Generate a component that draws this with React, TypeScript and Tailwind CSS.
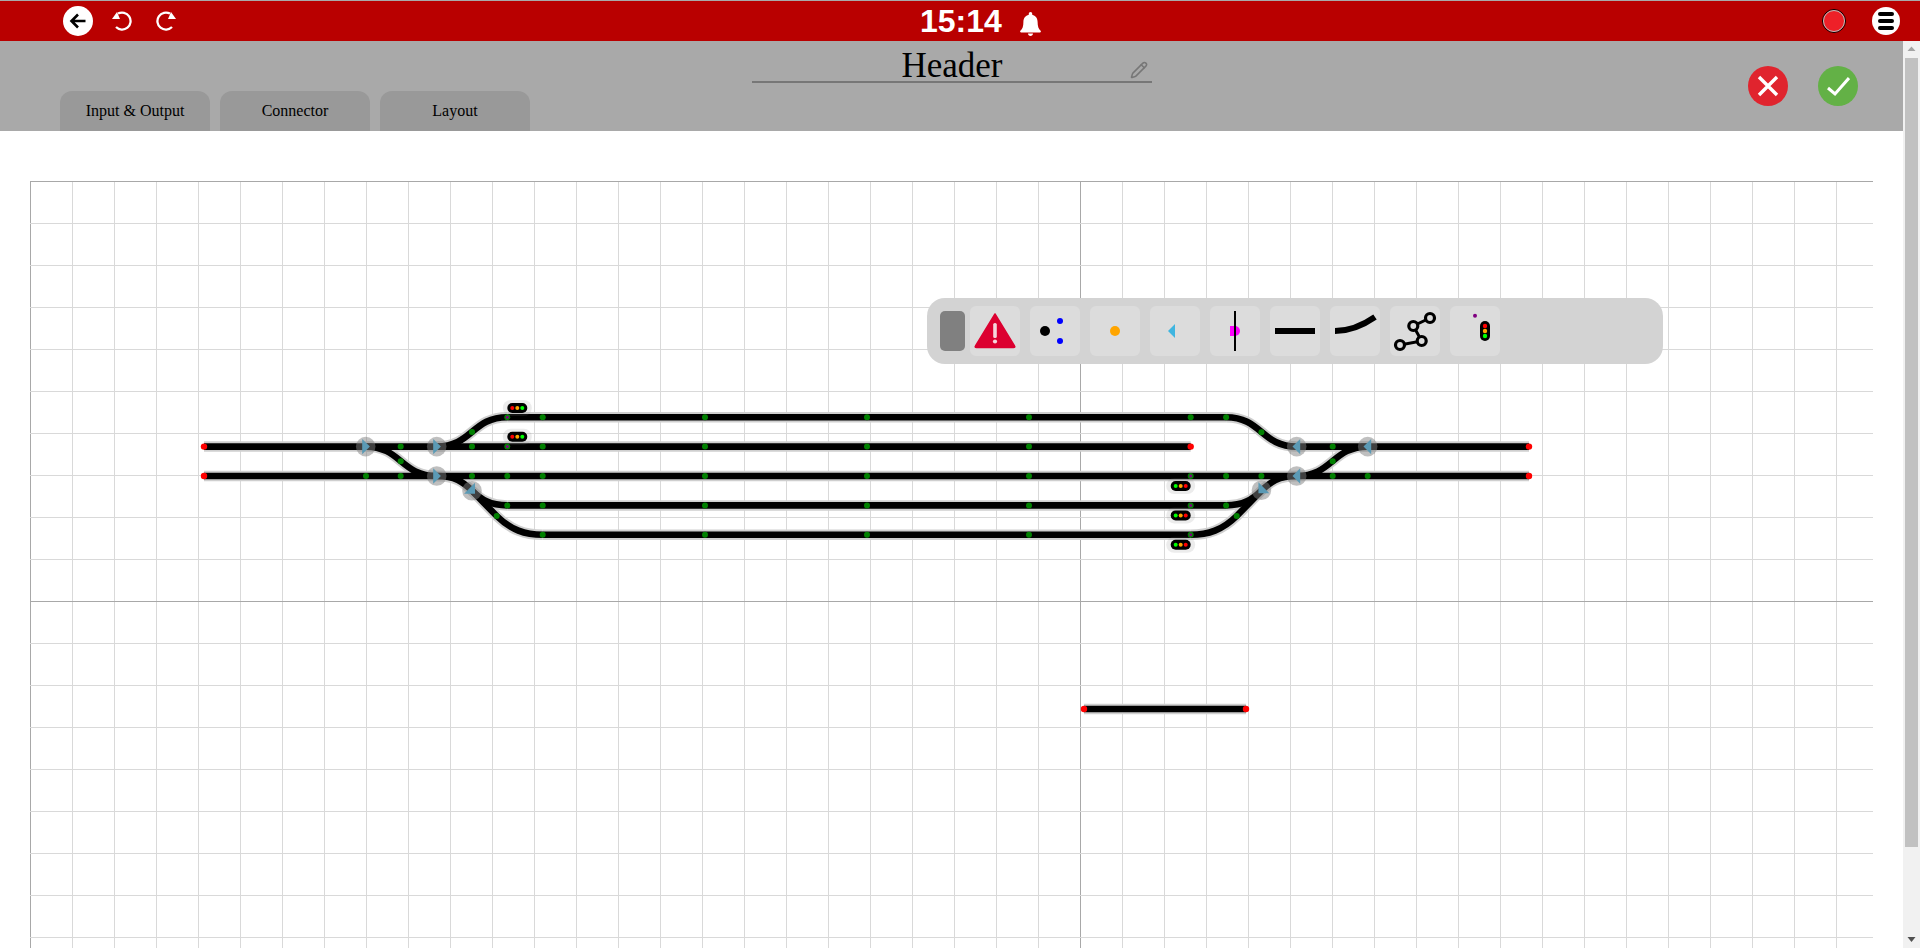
import { Pencil } from "lucide-react";

const rows = [417.2, 446.6, 476, 505.4, 534.8];
const mirror = 1733.4;

// every curve is given for the left throat, the right throat is its mirror
const leftCurves = [
  "M436.7 446.6 C472 446.6 472 417.2 507.3 417.2",
  "M365.7 446.6 C401 446.6 401 476 436.7 476",
  "M436.7 476 C455 476 463 482 472 490.7 C481 499.5 490 505.4 507.3 505.4",
  "M472 490.7 L496.7 516 C511 530 525 534.8 542.7 534.8",
];

const straights: [number, number, number][] = [
  [507.3, 1226.1, rows[0]],
  [204, 1190.7, rows[1]],
  [204, 1529, rows[2]],
  [507.3, 1226.1, rows[3]],
  [542.7, 1190.7, rows[4]],
  [1296.7, 1529, rows[1]],
  [1084, 1246, 709],
];

const greenDots: [number, number][] = [
  [542.7, rows[0]], [705, rows[0]], [867, rows[0]], [1029, rows[0]], [1190.7, rows[0]], [1226.1, rows[0]],
  [400.7, rows[1]], [472, rows[1]], [542.7, rows[1]], [705, rows[1]], [867, rows[1]], [1029, rows[1]], [1332.7, rows[1]],
  [366, rows[2]], [400.7, rows[2]], [472, rows[2]], [507.3, rows[2]], [542.7, rows[2]], [705, rows[2]], [867, rows[2]], [1029, rows[2]], [1226.1, rows[2]], [1261.4, rows[2]], [1332.7, rows[2]], [1367.7, rows[2]],
  [507.3, rows[3]], [542.7, rows[3]], [705, rows[3]], [867, rows[3]], [1029, rows[3]], [1226.1, rows[3]],
  [542.7, rows[4]], [705, rows[4]], [867, rows[4]], [1029, rows[4]],
  [472, 432], [400.7, 461.3], [496.7, 516], [1236.7, 516], [1261.4, 432.3], [1332.7, 461.3],
];

const sensorDots: [number, number][] = [
  [507.3, rows[0]], [507.3, rows[1]], [1190.7, rows[2]], [1190.7, rows[3]], [1190.7, rows[4]],
];

const redEnds: [number, number][] = [
  [204, rows[1]], [204, rows[2]], [1529, rows[1]], [1529, rows[2]], [1190.7, rows[1]], [1084, 709], [1246, 709],
];

const switches: [number, number, number][] = [
  [365.7, rows[1], 0], [436.7, rows[1], 0], [436.7, rows[2], 0], [472, 490.7, 45],
  [1296.7, rows[1], 180], [1367.7, rows[1], 180], [1296.7, rows[2], 180], [1261.4, 490.2, 135],
];

const lights: [number, number, string[]][] = [
  [517.3, 408, ["#ff0000", "#ffa500", "#00ff00"]],
  [517.3, 436.7, ["#ff0000", "#ffa500", "#00ff00"]],
  [1180.7, 486, ["#00ff00", "#ffa500", "#ff0000"]],
  [1180.7, 515.4, ["#00ff00", "#ffa500", "#ff0000"]],
  [1180.7, 544.8, ["#00ff00", "#ffa500", "#ff0000"]],
];

const gridX = Array.from({ length: 44 }, (_, i) => 30 + i * 42);
const gridY = Array.from({ length: 19 }, (_, i) => 181 + i * 42);

function TrackPlan() {
  const allCurves = (d: string, stroke: string, w: number, keyName: string) => [
    <path key={keyName + d} d={d} fill="none" stroke={stroke} strokeWidth={w} />,
    <path key={keyName + d + "m"} d={d} transform={`translate(${mirror} 0) scale(-1 1)`} fill="none" stroke={stroke} strokeWidth={w} />,
  ];
  return (
    <svg viewBox="30 181 1843 767" className="block w-[1843px] h-[767px]">
      {gridX.map((x) => (
        <line key={x} x1={x + 0.5} x2={x + 0.5} y1={181} y2={948} stroke={x === 1080 ? "#a8a8a8" : x === 30 ? "#a8a8a8" : "#d9d9d9"} strokeWidth={1} />
      ))}
      {gridY.map((y) => (
        <line key={y} x1={30} x2={1873} y1={y + 0.5} y2={y + 0.5} stroke={y === 601 ? "#a8a8a8" : y === 181 ? "#a8a8a8" : "#d9d9d9"} strokeWidth={1} />
      ))}

      {leftCurves.map((d) => allCurves(d, "#cfcfcf", 10.5, "h"))}
      {straights.map(([a, b, y]) => (
        <line key={`h${a}${y}`} x1={a} x2={b} y1={y} y2={y} stroke="#cfcfcf" strokeWidth={10.5} />
      ))}
      {leftCurves.map((d) => allCurves(d, "#000000", 6.6, "k"))}
      {straights.map(([a, b, y]) => (
        <line key={`k${a}${y}`} x1={a} x2={b} y1={y} y2={y} stroke="#000000" strokeWidth={6.6} />
      ))}

      {greenDots.map(([x, y]) => (
        <circle key={`g${x}-${y}`} cx={x} cy={y} r={3} fill="#008000" />
      ))}
      {sensorDots.map(([x, y]) => (
        <g key={`s${x}-${y}`}>
          <circle cx={x} cy={y} r={3} fill="#008000" />
          <circle cx={x} cy={y} r={1.5} fill="#800080" />
        </g>
      ))}
      {redEnds.map(([x, y]) => (
        <circle key={`r${x}-${y}`} cx={x} cy={y} r={3.2} fill="#ff0000" />
      ))}

      {switches.map(([x, y, rot]) => (
        <g key={`t${x}-${y}`} transform={`translate(${x} ${y}) rotate(${rot})`}>
          <circle r={9.8} fill="#808080" fillOpacity={0.5} />
          <path d="M-3.5 -7.7 L4.2 0 L-3.5 7.7 Z" fill="#5b9ab5" />
        </g>
      ))}

      {lights.map(([x, y, colors]) => (
        <g key={`l${x}-${y}`}>
          <rect x={x - 14.5} y={y - 8} width={29} height={16} rx={8} fill="#808080" fillOpacity={0.15} />
          <rect x={x - 10} y={y - 5} width={20} height={10} rx={5} fill="#000000" />
          {colors.map((c, i) => (
            <circle key={i} cx={x - 5 + i * 5} cy={y} r={2} fill={c} />
          ))}
        </g>
      ))}
    </svg>
  );
}

function Tool({ children }: { children: React.ReactNode }) {
  return (
    <div className="w-[50px] h-[50px] rounded-md bg-[#dcdcdc]">
      <svg viewBox="0 0 50 50" className="block w-[50px] h-[50px]">
        {children}
      </svg>
    </div>
  );
}

function Toolbar() {
  return (
    <div className="absolute left-[927px] top-[167px] w-[736px] h-[66px] rounded-[18px] bg-[#d3d3d3] flex items-center gap-[5px] pl-[13px]">
      <div className="w-[25px] h-[40px] rounded-[5px] bg-[#808080]" />
      <div className="flex gap-[10px]">
        <Tool>
          <path d="M25 8 L44.5 40 Q45.5 41.5 43.5 41.5 L6.5 41.5 Q4.5 41.5 5.5 40 Z" fill="#dc0030" stroke="#dc0030" strokeWidth={1.5} strokeLinejoin="round" />
          <rect x={23.2} y={17} width={3.6} height={15} rx={1.6} fill="#f5d5dc" />
          <circle cx={25} cy={35.5} r={2.1} fill="#f5d5dc" />
        </Tool>
        <Tool>
          <circle cx={15} cy={25} r={5} fill="#000000" />
          <circle cx={30} cy={15} r={3} fill="#0000ff" />
          <circle cx={30} cy={35} r={3} fill="#0000ff" />
        </Tool>
        <Tool>
          <circle cx={25} cy={25} r={5} fill="#ffa500" />
        </Tool>
        <Tool>
          <path d="M18 25 L25 18 L25 32 Z" fill="#3fb5e0" />
        </Tool>
        <Tool>
          <path d="M20 20 L25 20 A5 5 0 0 1 25 30 L20 30 Z" fill="#ff00ff" />
          <rect x={24} y={5} width={2} height={40} fill="#000000" />
        </Tool>
        <Tool>
          <rect x={5} y={22} width={40} height={6} fill="#000000" />
        </Tool>
        <Tool>
          <path d="M5 25 C20 25 32 20 45 11" fill="none" stroke="#000000" strokeWidth={6} />
        </Tool>
        <Tool>
          <path d="M10 39 L31.7 35 L23.3 20 L40 12" fill="none" stroke="#000000" strokeWidth={3} />
          <circle cx={10} cy={39} r={4.5} fill="#dcdcdc" stroke="#000000" strokeWidth={3.2} />
          <circle cx={31.7} cy={35} r={4.5} fill="#dcdcdc" stroke="#000000" strokeWidth={3.2} />
          <circle cx={23.3} cy={20} r={4.5} fill="#dcdcdc" stroke="#000000" strokeWidth={3.2} />
          <circle cx={40} cy={12} r={4.5} fill="#dcdcdc" stroke="#000000" strokeWidth={3.2} />
        </Tool>
        <Tool>
          <circle cx={25} cy={9.7} r={2} fill="#800080" />
          <rect x={30} y={15} width={10} height={20} rx={5} fill="#000000" />
          <circle cx={35} cy={20} r={2.2} fill="#ff0000" />
          <circle cx={35} cy={25} r={2.2} fill="#ffa500" />
          <circle cx={35} cy={30} r={2.2} fill="#00ff00" />
        </Tool>
      </div>
    </div>
  );
}

function App() {
  return (
    <div className="w-[1920px] h-[948px] overflow-hidden flex flex-col bg-white font-['Liberation_Serif',serif] text-black">
      <div className="h-[41px] shrink-0 bg-[#b90000] border-t border-[#a9a9a9] relative flex items-center pl-[63px] pr-[20px]">
        <div className="w-[30px] h-[30px] rounded-full bg-white flex items-center justify-center">
          <svg viewBox="0 0 20 20" className="w-[20px] h-[20px]">
            <path d="M17.5 10 H4 M10 3.5 L3.5 10 L10 16.5" fill="none" stroke="#000000" strokeWidth={2.6} />
          </svg>
        </div>
        <svg viewBox="0 0 22 20" className="w-[22px] h-[20px] ml-[18px]">
          <path d="M7 2.6 A8.5 8.5 0 1 1 5 16" fill="none" stroke="#ffffff" strokeWidth={2.3} />
          <path d="M1 8 L6 1 L9 8 Z" fill="#ffffff" />
        </svg>
        <svg viewBox="0 0 22 20" className="w-[22px] h-[20px] ml-[22px]">
          <path d="M15 2.6 A8.5 8.5 0 1 0 17 16" fill="none" stroke="#ffffff" strokeWidth={2.3} />
          <path d="M21 8 L16 1 L13 8 Z" fill="#ffffff" />
        </svg>
        <div className="absolute left-[920px] top-[2px] font-['Liberation_Sans',sans-serif] font-bold text-[32px] leading-[36px] text-white flex items-center">
          <span>15:14</span>
          <svg viewBox="0 0 21 24" className="ml-[18px] mt-[5px] w-[21px] h-[24px]">
            <path d="M10.5 0 C9.4 0 8.8 .8 8.8 1.8 L8.8 2.8 C5.4 3.6 3.4 6.4 3.4 10 C3.4 14.5 2.4 17 .4 18.8 C-.2 19.4 .2 20.4 1 20.4 L20 20.4 C20.8 20.4 21.2 19.4 20.6 18.8 C18.6 17 17.6 14.5 17.6 10 C17.6 6.4 15.6 3.6 12.2 2.8 L12.2 1.8 C12.2 .8 11.6 0 10.5 0 Z M8 21.6 C8 23 9.1 24 10.5 24 C11.9 24 13 23 13 21.6 Z" fill="#ffffff" />
          </svg>
        </div>
        <div className="ml-auto flex items-center gap-[26px]">
          <div className="w-[24px] h-[24px] rounded-full bg-[#ee2028] border border-black outline outline-1 -outline-offset-2 outline-[#bbbbbb]" />
          <div className="w-[28px] h-[28px] rounded-full bg-white flex flex-col items-center justify-center gap-[3px]">
            <div className="w-[16px] h-[4px] rounded-full bg-black" />
            <div className="w-[16px] h-[4px] rounded-full bg-black" />
            <div className="w-[16px] h-[4px] rounded-full bg-black" />
          </div>
        </div>
      </div>

      <div className="flex flex-1 min-h-0">
        <div className="w-[1903px] flex flex-col relative">
          <div className="h-[90px] shrink-0 bg-[#a9a9a9] relative flex items-end pl-[60px] gap-[10px]">
            {["Input & Output", "Connector", "Layout"].map((t) => (
              <div key={t} className="w-[150px] h-[40px] rounded-t-[12px] bg-[#999999] flex items-center justify-center text-[16px]">
                {t}
              </div>
            ))}
            <div className="absolute left-[752px] top-[0px] w-[400px] h-[42px] pt-[7px] border-b-2 border-[#777777] text-center text-[35px] leading-[36px]">
              Header
              <Pencil className="absolute right-[4px] top-[20px] w-[18px] h-[18px]" stroke="#777777" />
            </div>
            <div className="absolute left-[1748px] top-[25px] flex gap-[30px]">
              <div className="w-[40px] h-[40px] rounded-full bg-[#e0242e] flex items-center justify-center">
                <svg viewBox="0 0 24 24" className="w-[24px] h-[24px]">
                  <path d="M3 3 L21 21 M21 3 L3 21" stroke="#ffffff" strokeWidth={3.4} />
                </svg>
              </div>
              <div className="w-[40px] h-[40px] rounded-full bg-[#63b146] flex items-center justify-center">
                <svg viewBox="0 0 24 24" className="w-[24px] h-[24px]">
                  <path d="M2 14 L9 20 L23 4" fill="none" stroke="#ffffff" strokeWidth={3} />
                </svg>
              </div>
            </div>
          </div>
          <div className="flex-1 min-h-0 pl-[30px] pt-[50px] relative">
            <TrackPlan />
            <Toolbar />
          </div>
        </div>

        <div className="w-[17px] shrink-0 bg-[#f1f1f1] flex flex-col items-center">
          <svg viewBox="0 0 17 17" className="w-[17px] h-[17px] shrink-0">
            <path d="M8.5 5.5 L12.5 10 L4.5 10 Z" fill="#a3a3a3" />
          </svg>
          <div className="w-[13px] h-[789px] bg-[#c1c1c1]" />
          <div className="flex-1" />
          <svg viewBox="0 0 17 17" className="w-[17px] h-[17px] shrink-0">
            <path d="M4.5 6 L12.5 6 L8.5 11 Z" fill="#505050" />
          </svg>
        </div>
      </div>
    </div>
  );
}

export default App;
